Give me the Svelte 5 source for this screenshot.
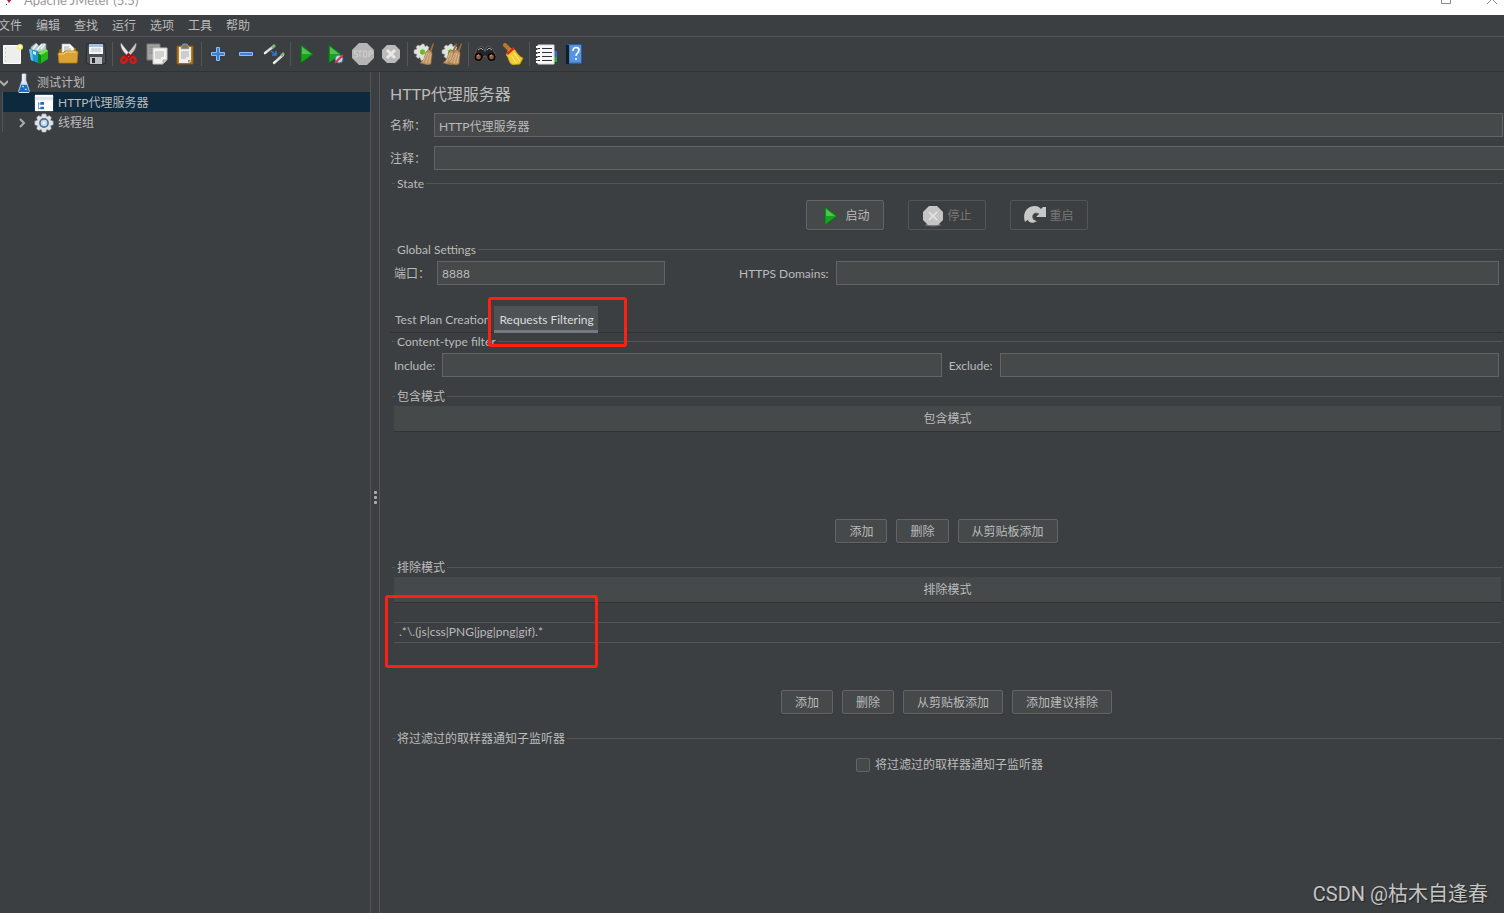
<script>
  const menus = ['文件', '编辑', '查找', '运行', '选项', '工具', '帮助'];

  const toolGroups = [
    [
      { icon: 'new', label: '新建' },
      { icon: 'templates', label: '模板' },
      { icon: 'open', label: '打开' },
      { icon: 'save', label: '保存' },
    ],
    [
      { icon: 'cut', label: '剪切' },
      { icon: 'copy', label: '复制' },
      { icon: 'paste', label: '粘贴' },
    ],
    [
      { icon: 'plus', label: '展开' },
      { icon: 'minus', label: '折叠' },
      { icon: 'toggle', label: '切换' },
    ],
    [
      { icon: 'start', label: '启动' },
      { icon: 'start-no-timers', label: '不停顿开始' },
      { icon: 'stop', label: '停止', disabled: true },
      { icon: 'shutdown', label: '关闭', disabled: true },
    ],
    [
      { icon: 'clear', label: '清除' },
      { icon: 'clear-all', label: '清除全部' },
    ],
    [
      { icon: 'search', label: '查找' },
      { icon: 'broom', label: '重置查找' },
    ],
    [
      { icon: 'functions', label: '函数助手' },
      { icon: 'help', label: '帮助' },
    ],
  ];

  let name = $state('HTTP代理服务器');
  let comment = $state('');
  let port = $state('8888');
  let domains = $state('');
  let include = $state('');
  let exclude = $state('');
  let notify = $state(false);
  let activeTab = $state('Requests Filtering');

  const tabs = ['Test Plan Creation', 'Requests Filtering'];
  const excludeRows = ['', '.*\\.(js|css|PNG|jpg|png|gif).*'];
</script>

{#snippet gearBroom()}
  <path d="M9 1l2 0 1 2.500 2-1 2 2-1 2 2 1v3l-2 1 1 2-2 2-2-1-1 3H8l-1-3-2 1-2-2 1-2-3-1V7l3-1-1-2 2-2 2 1z" fill="#e2e2e0" stroke="#999" stroke-width=".6" />
  <circle cx="9.500" cy="9" r="3.200" fill="#6cb82c" stroke="#d8eec4" />
{/snippet}

{#snippet broomHead()}
  <path d="M20 0l1 1-3 9-2-1z" fill="#a06a38" />
  <path d="M13 9l2-2 4 2v3l-1 9-3 1-8-2 4-4z" fill="#bf9566" stroke="#8b6237" stroke-width=".6" />
  <path d="M14 10l-4 9M16 10l-3 10M18 11l-2 9" stroke="#e3c397" stroke-width=".8" />
{/snippet}

{#snippet icon(kind)}
  <svg class="icon" width="22" height="22" viewBox="0 0 22 22" fill="none" aria-hidden="true">
    {#if kind === 'new'}
      <path d="M2.500 2.500h17v18h-17z" fill="#eeeeec" stroke="#fff" />
      <path d="M4.500 5v14" stroke="#c2c2c2" stroke-dasharray="1 3" />
      <circle cx="19" cy="4" r="3" fill="#f4ef78" />
      <circle cx="19" cy="4" r="1.300" fill="#fff" />
    {:else if kind === 'templates'}
      <path d="M2 4l5-4 3 3 4-3 3 1v8H2z" fill="#b8c9cc" stroke="#78979d" stroke-width=".7" />
      <path d="M4 6l4-5M8 7l5-6M12 6l4-5" stroke="#eef6f7" stroke-width="1.400" />
      <path d="M0 6l9 2v12l-7-3z" fill="#1998d2" />
      <path d="M0 6l3 1 1 11-2-1z" fill="#67c7ee" />
      <path d="M4 8l3 1v3l-3-1z" fill="#d7f2fc" />
      <path d="M9 10l8-4 2 2v8l-8 5-2-2z" fill="#23b61e" />
      <path d="M9 10l3 2v9l-3-2z" fill="#0c7f17" />
      <path d="M9 10l8-4 2 2-7 4z" fill="#78e451" />
    {:else if kind === 'open'}
      <path d="M2 7l3-2h14v6H2z" fill="#9d6b12" />
      <path d="M5 1h8l4 4v7H5z" fill="#f5f5f5" stroke="#bbb" stroke-width=".6" />
      <path d="M7 4h5M7 6h7M7 8h7" stroke="#aaa" />
      <path d="M1 10h5l2-2h12l1 1-1 11H2z" fill="#dda236" stroke="#b57b14" stroke-width=".8" />
      <path d="M2 11h5l2-2h10" stroke="#f8d889" />
    {:else if kind === 'save'}
      <path d="M2 1h18l1 19-2 1H3l-2-2z" fill="#4b4d52" stroke="#28292c" />
      <path d="M4 1h14v10H4z" fill="#f2f5fa" />
      <path d="M4 1h14v3H4z" fill="#a9bedd" />
      <path d="M6 6h10M6 8h10" stroke="#b6bec8" />
      <path d="M5 14h12v7H5z" fill="#bfc1c4" />
      <path d="M7 15h3v5H7z" fill="#292a2c" />
    {:else if kind === 'cut'}
      <path d="M3 0c-1 4 2 9 8 14l2-2C9 8 6 4 3 0z" fill="#ededeb" stroke="#999" stroke-width=".5" />
      <path d="M18 0c1 4-2 9-8 14l-2-2c4-4 7-8 10-12z" fill="#ccc" stroke="#888" stroke-width=".5" />
      <ellipse cx="6" cy="17" rx="2.500" ry="3" transform="rotate(30 6 17)" stroke="#dc1717" stroke-width="2.400" />
      <ellipse cx="15" cy="17" rx="2.500" ry="3" transform="rotate(-30 15 17)" stroke="#dc1717" stroke-width="2.400" />
      <path d="M8 14l2.500-2.500L13 14" stroke="#ba0909" stroke-width="2.400" />
    {:else if kind === 'copy'}
      <path d="M1 1h13v16H1z" fill="#a5a5a2" stroke="#777" />
      <path d="M3 4h9M3 7h7M3 10h5" stroke="#858582" />
      <path d="M7 5h14v12l-4 4H7z" fill="#f3f3f1" stroke="#c3c3c0" />
      <path d="M9 9h9M9 11h9M9 13h9M9 15h6" stroke="#b0b0ad" />
      <path d="M17 21v-4h4z" fill="#d0d0cd" stroke="#92928e" stroke-width=".6" />
    {:else if kind === 'paste'}
      <path d="M3 3h16v18H3z" fill="#bd7c20" stroke="#875516" />
      <path d="M5 4h12v14l-2 2H5z" fill="#efefed" />
      <path d="M7 4l2-3h4l2 3v2H7z" fill="#777975" stroke="#bbb" stroke-width=".6" />
      <path d="M7 9h8M7 11h8M7 13h8M7 15h5" stroke="#aaa" />
      <path d="M14 20v-3h3z" fill="#969691" />
    {:else if kind === 'plus'}
      <path d="M9.500 4.500h3v5h5v3h-5v5h-3v-5h-5v-3h5z" fill="#3f7fd2" stroke="#88bdfa" />
    {:else if kind === 'minus'}
      <path d="M4.500 9.500h13v3h-13z" fill="#3f7fd2" stroke="#88bdfa" />
    {:else if kind === 'toggle'}
      <path d="M2 10L11 3M11 20l9-8" stroke="#ddd" stroke-width="2.400" stroke-linecap="round" />
      <path d="M9 5l3-3M18 13l3-3" stroke="#7fb771" stroke-width="2.600" />
      <path d="M1 11l3-2M10 20l3-2" stroke="#fff" />
      <path d="M8 8l5 4m0-4v4h-4" stroke="#287bdc" stroke-width="1.500" />
    {:else if kind === 'start' || kind === 'start-no-timers'}
      <path d="M5 2l12 9-12 9z" fill="#14a619" stroke="#087211" stroke-width=".8" />
      <path d="M6 4l9 7H6z" fill="#58bd56" />
      {#if kind === 'start-no-timers'}
        <circle cx="15" cy="16" r="4" fill="#bad3ed" stroke="#477bb8" />
        <path d="M11 20l8-8" stroke="#da342d" stroke-width="1.800" />
      {/if}
    {:else if kind === 'stop'}
      <path d="M7 0h8l7 7v8l-7 7H7l-7-7V7z" fill="#b5b5b5" />
      <path d="M5.500 8H2.500v3h3v3H2M6 8h4M8 8v6M11.500 8h3v6h-3zM17 14V8h3v3h-3" stroke="#d0d0d0" />
    {:else if kind === 'shutdown'}
      <path d="M7 2h8l5 5v8l-5 5H7l-5-5V7z" fill="#bababa" />
      <path d="M7 7l8 8m0-8l-8 8" stroke="#e8e8e8" stroke-width="3" />
    {:else if kind === 'clear'}
      {@render gearBroom()}
      {@render broomHead()}
    {:else if kind === 'clear-all'}
      {@render gearBroom()}
      <g transform="translate(-5 0)">{@render broomHead()}</g>
      {@render broomHead()}
    {:else if kind === 'search'}
      <path d="M3 6l4-3 3 2v3h2V5l3-2 4 3 3 8-3 4-5-1-2-4h-2l-2 4-5 1-3-4z" fill="#252525" stroke="#777" stroke-width=".6" />
      <path d="M4 7l3-2 2 2M13 7l2-2 3 2" stroke="#aaa" />
      <circle cx="4.500" cy="14" r="3.200" fill="#94603a" stroke="#050505" stroke-width="1.600" />
      <circle cx="17.500" cy="14" r="3.200" fill="#94603a" stroke="#050505" stroke-width="1.600" />
      <path d="M3 13l2-1M16 13l2-1" stroke="#d79b76" />
    {:else if kind === 'broom'}
      <path d="M3 2l6 6" stroke="#bc762a" stroke-width="4" stroke-linecap="round" />
      <path d="M5 10c1-4 4-5 7-4 3 3 4 7 9 9l-3 6-7 1c-5-2-4-8-7-10z" fill="#efcb35" stroke="#be910c" stroke-width=".8" />
      <path d="M5 11l7-6" stroke="#d72819" stroke-width="2.400" />
      <path d="M9 12l5 8M12 10l6 8" stroke="#fff17d" />
    {:else if kind === 'functions'}
      <path d="M19 8h3v7h-3z" fill="#326fcc" />
      <path d="M19 14h3v5h-3z" fill="#29a83b" />
      <path d="M3 2h16v19H3z" fill="#f7f7f7" stroke="#ddd" />
      <path d="M7 5.500h10M7 9.500h10M7 13.500h10M7 17.500h10" stroke="#2e3438" />
      <path d="M1 4h4M1 8h4M1 12h4M1 16h4M1 19h4" stroke="#fff" stroke-width="2" />
      <path d="M3 5.500h2M3 9.500h2M3 13.500h2M3 17.500h2" stroke="#222" />
    {:else if kind === 'help'}
      <path d="M3 2l2-1h14v20H3z" fill="#477fc8" stroke="#203e64" />
      <path d="M3 2h3v19H3z" fill="#141c26" />
      <path d="M7 2h11v17H7z" fill="#5795e3" />
      <path d="M10 8c0-5 6-4 6-1 0 3-3 3-3 6M13 15v2" stroke="#fff" stroke-width="1.600" />
    {:else if kind === 'stop-gray'}
      <ellipse cx="11" cy="20" rx="8" ry="1.500" fill="#777" />
      <path d="M7 1h8l6 6v8l-5 5H6l-5-5V7z" fill="#c5c5c5" />
      <path d="M7 7l8 8m0-8l-8 8" stroke="#e8e8e8" stroke-width="1.400" />
    {:else if kind === 'restart'}
      <path d="M1 17C-2 8 3 1 11 1c3 0 4 1 6 3l2-2h3v10H12l3-3c-4-2-7 0-6 4 1 2 2 3 4 3-4 3-8 2-9-1-1 0-2 1-3 2z" fill="#c7c7c7" />
      <path d="M15 9c-4-2-7 0-6 4l1 2" stroke="#555" />
    {:else if kind === 'plan'}
      <path d="M9 1h4v7l4 12-1 2H6l-1-2L9 8z" fill="#d6e5f2" stroke="#eef3f7" stroke-width=".7" />
      <path d="M8 13h6l3 8H5z" fill="#1670cf" />
      <path d="M10 2v8M9 15h2M12 18h2" stroke="#fff" />
    {:else if kind === 'proxy'}
      <path d="M1 3h20v17H1z" fill="#fff" />
      <path d="M1 3h20v5H1z" fill="#dfe6ee" />
      <path d="M1 3h20" stroke="#fff" stroke-width="2" />
      <path d="M5 10v8M5 12h4M5 17h4" stroke="#6192c9" />
      <path d="M7 10h4v3H7zM7 15h4v3H7z" fill="#246cc4" />
    {:else if kind === 'thread'}
      <path d="M9 1h4l1 3 3-1 2 2-1 3 3 1v4l-3 1 1 3-2 2-3-1-1 3H9l-1-3-3 1-2-2 1-3-3-1V9l3-1-1-3 2-2 3 1z" fill="#e1e4e7" stroke="#aeb5bd" stroke-width=".7" />
      <circle cx="11" cy="11" r="4.500" fill="#d5e2f0" stroke="#446e9f" stroke-width="1.800" />
      <path d="M9 8l5 3-5 3z" fill="#fff" stroke="#7890aa" stroke-width=".5" />
    {/if}
  </svg>
{/snippet}

<div class="app">
  <header class="titlebar">
    <svg width="16" height="16" viewBox="0 0 16 16" aria-hidden="true">
      <path d="M8 3l4 5-3 4-2-3z" fill="#ad194c" />
      <path d="M6 13h1v1H6z" fill="#31357b" />
    </svg>
    <span class="caption">Apache JMeter (5.5)</span>
    <button class="window-button" aria-label="最大化">
      <svg width="12" height="12" viewBox="0 0 12 12" fill="none"><path d="M1.500 1.500h9v9h-9z" stroke="#888" /></svg>
    </button>
    <button class="window-button" aria-label="关闭窗口">
      <svg width="12" height="12" viewBox="0 0 12 12" fill="none"><path d="M1 1l10 10M11 1L1 11" stroke="#888" /></svg>
    </button>
  </header>

  <nav class="menubar">
    {#each menus as item}
      <button>{item}</button>
    {/each}
  </nav>

  <div class="toolbar" role="toolbar" aria-label="工具栏">
    {#each toolGroups as group}
      <div class="tool-group">
        {#each group as tool}
          <button aria-label={tool.label} disabled={tool.disabled}>{@render icon(tool.icon)}</button>
        {/each}
      </div>
    {/each}
  </div>

  <main>
    <aside class="tree">
      <button class="node">
        <svg width="8" height="8" viewBox="0 0 8 8" fill="none"><path d="M0 2l4 4 4-4" stroke="#adadad" stroke-width="2" /></svg>
        <span class="node-icon small">{@render icon('plan')}</span>
        测试计划
      </button>
      <div class="children">
        <button class="node child selected">
          <span class="node-icon">{@render icon('proxy')}</span>
          HTTP代理服务器
        </button>
        <button class="node child">
          <svg class="arrow" width="8" height="10" viewBox="0 0 8 10" fill="none"><path d="M2 1l4 4-4 4" stroke="#adadad" stroke-width="2" /></svg>
          <span class="node-icon">{@render icon('thread')}</span>
          线程组
        </button>
      </div>
    </aside>

    <div class="splitter"><i></i><i></i><i></i></div>

    <section class="panel">
      <h1>HTTP代理服务器</h1>
      <div class="field">
        <label for="name">名称：</label>
        <input id="name" bind:value={name} />
      </div>
      <div class="field comment">
        <label for="comment">注释：</label>
        <input id="comment" bind:value={comment} />
      </div>

      <fieldset>
        <legend>State</legend>
        <div class="buttons state">
          <button>{@render icon('start')}启动</button>
          <button disabled>{@render icon('stop-gray')}停止</button>
          <button disabled>{@render icon('restart')}重启</button>
        </div>
      </fieldset>

      <fieldset>
        <legend>Global Settings</legend>
        <div class="row settings">
          <label for="port">端口：</label>
          <input id="port" class="port" bind:value={port} />
          <label for="domains" class="domains">HTTPS Domains:</label>
          <input id="domains" bind:value={domains} />
        </div>
      </fieldset>

      <div class="tabs" role="tablist">
        {#each tabs as tab}
          <button role="tab" class:active={tab === activeTab} aria-selected={tab === activeTab} onclick={() => (activeTab = tab)}>
            {tab}
          </button>
        {/each}
        <div class="mark mark-tab"></div>
      </div>

      <fieldset>
        <legend>Content-type filter</legend>
        <div class="row">
          <label for="include">Include:</label>
          <input id="include" bind:value={include} />
          <label for="exclude">Exclude:</label>
          <input id="exclude" bind:value={exclude} />
        </div>
      </fieldset>

      <fieldset class="pattern-set">
        <legend>包含模式</legend>
        <div class="patterns">
          <table>
            <thead><tr><th>包含模式</th></tr></thead>
          </table>
        </div>
        <div class="buttons">
          <button>添加</button>
          <button>删除</button>
          <button>从剪贴板添加</button>
        </div>
      </fieldset>

      <fieldset class="pattern-set">
        <legend>排除模式</legend>
        <div class="patterns">
          <table>
            <thead><tr><th>排除模式</th></tr></thead>
            <tbody>
              {#each excludeRows as pattern}
                <tr><td>{pattern}</td></tr>
              {/each}
            </tbody>
          </table>
          <div class="mark mark-row"></div>
        </div>
        <div class="buttons">
          <button>添加</button>
          <button>删除</button>
          <button>从剪贴板添加</button>
          <button>添加建议排除</button>
        </div>
      </fieldset>

      <fieldset>
        <legend>将过滤过的取样器通知子监听器</legend>
        <label class="check">
          <input type="checkbox" bind:checked={notify} />
          将过滤过的取样器通知子监听器
        </label>
      </fieldset>
    </section>
  </main>

  <div class="watermark">CSDN @枯木自逢春</div>
</div>

<style>
  :global(body) {
    background: #3c3f41;
  }

  .app {
    position: relative;
    display: flex;
    flex-direction: column;
    min-height: 100vh;
    overflow: hidden;
    background: #3c3f41;
    color: #bbb;
    font: 12px/18px Lato, "Noto Sans CJK SC", sans-serif;
  }

  .app * {
    box-sizing: border-box;
  }

  button,
  input {
    font: inherit;
    color: inherit;
  }

  button {
    padding: 0;
    border: 0;
    background: none;
    white-space: nowrap;
  }

  svg {
    display: block;
    flex: none;
  }

  .titlebar {
    display: flex;
    align-items: flex-end;
    height: 15px;
    padding: 0 6px 8px 0;
    overflow: hidden;
    background: #fff;
    color: #999;
  }

  .caption {
    flex: 1;
    padding-left: 8px;
    font-size: 13px;
    line-height: 14px;
  }

  .window-button {
    margin-left: 34px;
    padding-bottom: 2px;
  }

  .menubar {
    display: flex;
    height: 22px;
    margin-left: -9px;
    border-bottom: 1px solid #555;
  }

  .menubar button {
    padding: 1px 7px 0;
  }

  .toolbar {
    display: flex;
    align-items: center;
    height: 35px;
    margin-left: -2px;
    border-bottom: 1px solid #323232;
  }

  .tool-group {
    display: flex;
    align-items: center;
    height: 24px;
  }

  .tool-group + .tool-group {
    margin-left: 2px;
    padding-left: 2px;
    border-left: 1px solid #555;
  }

  .tool-group button {
    padding: 0 3px;
  }

  main {
    display: flex;
    flex: 1;
  }

  .tree {
    flex: 0 0 370px;
  }

  .node {
    display: flex;
    align-items: center;
    width: 100%;
    height: 20px;
    padding-top: 2px;
    text-align: left;
  }

  .children {
    margin-left: 2px;
    border-left: 1px solid #555;
  }

  .child {
    padding-left: 31px;
  }

  .selected {
    background: #0d293e;
  }

  .node-icon {
    margin: 0 4px 0 0;
  }

  .node-icon .icon {
    width: 20px;
    height: 20px;
  }

  .small {
    margin: 0 3px 0 6px;
  }

  .arrow {
    margin: 0 8px 0 -16px;
  }

  .splitter {
    display: flex;
    flex: 0 0 10px;
    flex-direction: column;
    align-items: center;
    justify-content: center;
    gap: 2px;
    padding-top: 10px;
    border: 1px solid #555;
    border-width: 0 1px;
  }

  .splitter i {
    width: 3px;
    height: 3px;
    border-radius: 1px;
    background: #adadad;
  }

  .panel {
    flex: 1;
    min-width: 0;
    padding: 10px 1px 0 10px;
  }

  h1 {
    margin: 0 0 7px;
    font-size: 16px;
    line-height: 24px;
    font-weight: 400;
  }

  .field {
    display: flex;
    align-items: center;
    margin-bottom: 9px;
  }

  .field label {
    flex: 0 0 44px;
    padding-top: 2px;
  }

  .comment {
    margin: 0 -2px 5px 0;
  }

  input {
    flex: 1;
    min-width: 0;
    height: 24px;
    padding: 1px 4px 0;
    border: 1px solid #646464;
    border-radius: 0;
    background: #45494a;
    outline: 0;
  }

  fieldset {
    min-width: 0;
    margin: 0 0 11px;
    padding: 0;
    border: 0;
  }

  legend {
    display: flex;
    align-items: center;
    gap: 2px;
    width: 100%;
    padding: 0 0 0 2px;
    line-height: 18px;
  }

  legend::before,
  legend::after {
    content: "";
    width: 3px;
    height: 1px;
    margin-bottom: 2px;
    background: #555;
  }

  legend::after {
    flex: 1;
  }

  .row {
    display: flex;
    align-items: center;
    gap: 7px;
    padding: 2px 4px 0;
  }

  .row label {
    padding-top: 2px;
  }

  .settings label:first-child {
    flex: 0 0 36px;
  }

  .settings .port {
    flex: 0 0 228px;
  }

  .domains {
    margin-left: 67px;
  }

  .buttons {
    display: flex;
    justify-content: center;
    gap: 9px;
  }

  .buttons button {
    height: 24px;
    padding: 2px 13px 0;
    border: 1px solid #646464;
    border-radius: 2px;
    background: #45494a;
    box-shadow: 0 1px 0 #36393a;
    line-height: 20px;
  }

  .state {
    gap: 24px;
    padding-top: 7px;
  }

  .state button {
    display: flex;
    align-items: center;
    justify-content: center;
    gap: 4px;
    width: 78px;
    height: 30px;
  }

  .buttons button:disabled {
    border-color: #525556;
    background: none;
    box-shadow: none;
    color: #777;
  }

  .tabs {
    position: relative;
    display: flex;
    margin-top: 21px;
    border-bottom: 1px solid #323232;
  }

  .tabs button {
    height: 27px;
    margin-bottom: -1px;
    padding: 3px 4px 0 5px;
    border-bottom: 3px solid transparent;
  }

  .tabs .active {
    border-color: #747a80;
    background: #4e5254;
    color: #ddd;
  }

  .mark {
    position: absolute;
    border: 3px solid #ff2014;
    border-radius: 3px;
    pointer-events: none;
  }

  .mark-tab {
    top: -9px;
    left: 98px;
    width: 139px;
    height: 50px;
  }

  .mark-row {
    top: 18px;
    left: -5px;
    width: 213px;
    height: 73px;
  }

  .patterns {
    position: relative;
    min-height: 113px;
    padding: 0 2px 0 4px;
  }

  .pattern-set {
    margin-bottom: 16px;
  }

  table {
    width: 100%;
    border-collapse: collapse;
  }

  th {
    height: 25px;
    padding: 2px 0 0;
    border-bottom: 1px solid #323232;
    background: #45494a;
    font-weight: 400;
  }

  td {
    height: 20px;
    padding: 0 5px;
    border-bottom: 1px solid #525556;
    line-height: 18px;
  }

  .check {
    display: flex;
    align-items: center;
    justify-content: center;
    gap: 5px;
    padding: 8px 0 0 6px;
  }

  .check input {
    flex: none;
    width: 14px;
    height: 14px;
    margin: 0;
    border-radius: 2px;
    appearance: none;
  }

  .check input:checked {
    background: #adadad;
  }

  .watermark {
    position: absolute;
    right: 16px;
    bottom: 7px;
    color: #c4c5c5;
    font: 20px/24px Roboto, "Noto Sans CJK SC", sans-serif;
    text-shadow: 1px 1px 1px #222;
  }
</style>
